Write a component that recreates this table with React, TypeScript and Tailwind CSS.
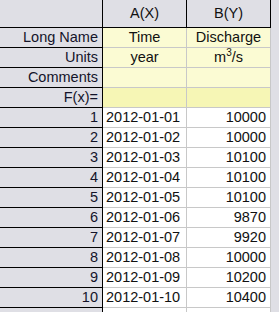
import React from 'react';

type Row = { label: string; a: React.ReactNode; b: React.ReactNode; kind: 'meta' | 'formula' | 'data' };

const rows: Row[] = [
  { label: 'Long Name', a: 'Time', b: 'Discharge', kind: 'meta' },
  { label: 'Units', a: 'year', b: <span>m<sup className="text-[10px] relative -top-[6px]">3</sup>/s</span>, kind: 'meta' },
  { label: 'Comments', a: '', b: '', kind: 'meta' },
  { label: 'F(x)=', a: '', b: '', kind: 'formula' },
  { label: '1', a: '2012-01-01', b: '10000', kind: 'data' },
  { label: '2', a: '2012-01-02', b: '10000', kind: 'data' },
  { label: '3', a: '2012-01-03', b: '10100', kind: 'data' },
  { label: '4', a: '2012-01-04', b: '10100', kind: 'data' },
  { label: '5', a: '2012-01-05', b: '10100', kind: 'data' },
  { label: '6', a: '2012-01-06', b: '9870', kind: 'data' },
  { label: '7', a: '2012-01-07', b: '9920', kind: 'data' },
  { label: '8', a: '2012-01-08', b: '10000', kind: 'data' },
  { label: '9', a: '2012-01-09', b: '10200', kind: 'data' },
  { label: '10', a: '2012-01-10', b: '10400', kind: 'data' },
  { label: '11', a: '2012-01-11', b: '10450', kind: 'data' },
];

export default function App() {
  return (
    <div
      className="w-[279px] h-[312px] overflow-hidden bg-[#dfdfe5] text-[14.5px] text-[#111]"
      style={{ fontFamily: '"Liberation Sans", Arial, sans-serif' }}
    >
      {/* Column headers */}
      <div className="flex h-[28px]">
        <div className="w-[103px] shrink-0 border-r border-b border-black" />
        <div className="w-[84px] shrink-0 border-r border-b border-black flex items-center justify-center pt-[1px]">A(X)</div>
        <div className="w-[84px] shrink-0 border-r border-b border-black flex items-center justify-center pt-[1px]">B(Y)</div>
        <div className="flex-1" />
      </div>

      {rows.map((row) => {
        const cellBg =
          row.kind === 'meta' ? 'bg-[#fbfbd3]' : row.kind === 'formula' ? 'bg-[#f6f6b5]' : 'bg-white';
        const isMeta = row.kind !== 'data';
        return (
          <div key={row.label} className="flex h-[20px] shrink-0">
            <div className="w-[103px] shrink-0 border-r border-b border-black flex items-center justify-end pr-[4px] text-[#14142a]">
              {row.label}
            </div>
            <div
              className={`w-[84px] shrink-0 border-r border-b border-[#c8c8c8] flex items-center ${cellBg} ${
                isMeta ? 'justify-center' : 'justify-start pl-[3px]'
              }`}
            >
              {row.a}
            </div>
            <div
              className={`w-[84px] shrink-0 border-r border-b border-[#c8c8c8] flex items-center ${cellBg} ${
                isMeta ? 'justify-center' : 'justify-end pr-[4px]'
              }`}
            >
              {row.b}
            </div>
            <div className="flex-1" />
          </div>
        );
      })}
    </div>
  );
}
